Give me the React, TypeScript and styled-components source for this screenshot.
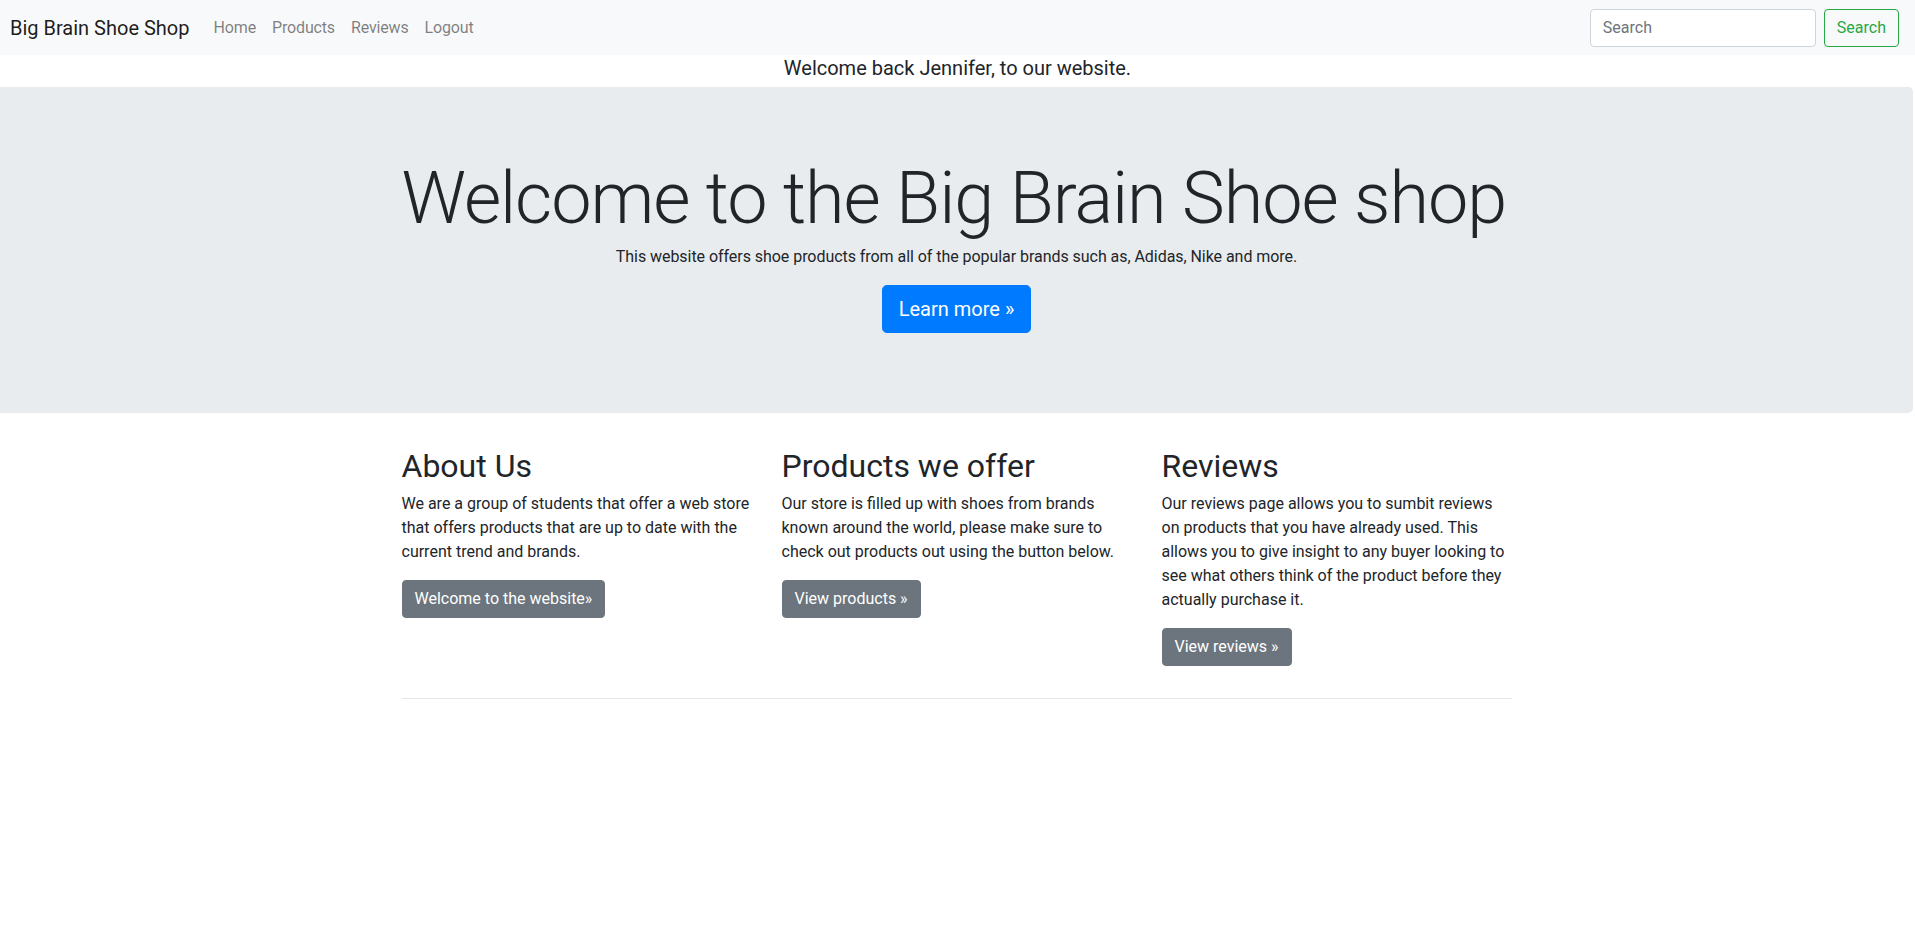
import React from "react";
import styled, { createGlobalStyle } from "styled-components";

const GlobalStyle = createGlobalStyle`
  *, *::before, *::after { box-sizing: border-box; }
  html, body { margin: 0; padding: 0; background: #fff; }
  body {
    font-family: Roboto, "Liberation Sans", Arial, sans-serif;
    font-size: 16px;
    line-height: 1.5;
    color: #212529;
  }
`;

const Navbar = styled.nav`
  display: flex;
  align-items: center;
  justify-content: space-between;
  height: 55px;
  padding: 0 16px 0 10px;
  background: #f8f9fa;
`;

const NavLeft = styled.div`
  display: flex;
  align-items: center;
`;

const Brand = styled.a`
  font-size: 20px;
  line-height: 30px;
  padding: 5px 0;
  margin-right: 16px;
  color: rgba(0, 0, 0, 0.9);
  text-decoration: none;
  white-space: nowrap;
`;

const NavList = styled.ul`
  display: flex;
  list-style: none;
  margin: 0;
  padding: 0;
`;

const NavLink = styled.a`
  display: block;
  padding: 8px;
  color: rgba(0, 0, 0, 0.5);
  text-decoration: none;
  letter-spacing: -0.15px;
`;

const SearchForm = styled.form`
  display: flex;
  align-items: center;
  gap: 8px;
`;

const SearchInput = styled.input`
  width: 226px;
  height: 38px;
  padding: 6px 12px;
  font: inherit;
  font-size: 16px;
  color: #495057;
  background: #fff;
  border: 1px solid #ced4da;
  border-radius: 4px;
  &::placeholder { color: #6c757d; opacity: 1; }
`;

const OutlineButton = styled.button`
  height: 38px;
  padding: 6px 12px;
  font: inherit;
  font-size: 16px;
  line-height: 24px;
  color: #28a745;
  background: transparent;
  border: 1px solid #28a745;
  border-radius: 4px;
`;

const WelcomeBack = styled.h5`
  margin: 0 0 8px;
  padding-top: 3px;
  font-size: 20px;
  font-weight: 400;
  line-height: 21px;
  text-align: center;
`;

const Main = styled.main`
  margin-right: 2px;
`;

const Jumbotron = styled.section`
  background: #e9ecef;
  padding: 64px 32px;
  margin-bottom: 32px;
  border-radius: 0 4.8px 4.8px 0;
`;

const Container = styled.div`
  max-width: 1140px;
  margin: 0 auto;
  padding: 0 15px;
`;

const Hero = styled(Container)`
  text-align: center;
`;

const Display = styled.h1`
  margin: 0 0 8px;
  padding-top: 10.4px;
  font-size: 72px;
  font-weight: 300;
  line-height: 76px;
  letter-spacing: -1.08px;
  white-space: nowrap;
  text-align: left;
`;

const Lead = styled.p`
  margin: 0 0 16px;
  letter-spacing: -0.05px;
`;

const ButtonRow = styled.p`
  margin: 0 0 16px;
`;

const PrimaryLg = styled.a`
  display: inline-block;
  padding: 8px 16px;
  font-size: 20px;
  line-height: 1.5;
  color: #fff;
  background: #007bff;
  border: 1px solid #007bff;
  border-radius: 4.8px;
  text-decoration: none;
`;

const Columns = styled.div`
  display: grid;
  grid-template-columns: repeat(3, 1fr);
  column-gap: 30px;
`;

const Column = styled.div``;

const ColTitle = styled.h2`
  margin: 0 0 8px;
  padding-top: 4.6px;
  font-size: 32px;
  font-weight: 400;
  line-height: 33.8px;
`;

const ColText = styled.p`
  margin: 0 0 16px;
`;

const ColAction = styled.p`
  margin: 0 0 16px;
`;

const SecondaryButton = styled.a`
  display: inline-block;
  padding: 6px 12px;
  font-size: 16px;
  line-height: 24px;
  color: #fff;
  background: #6c757d;
  border: 1px solid #6c757d;
  border-radius: 4px;
  text-decoration: none;
`;

const Divider = styled.hr`
  margin: 16px 0;
  border: 0;
  border-top: 1px solid rgba(0, 0, 0, 0.1);
`;

const columns = [
  {
    title: "About Us",
    text: "We are a group of students that offer a web store that offers products that are up to date with the current trend and brands.",
    button: "Welcome to the website\u00bb",
  },
  {
    title: "Products we offer",
    text: "Our store is filled up with shoes from brands known around the world, please make sure to check out products out using the button below.",
    button: "View products \u00bb",
  },
  {
    title: "Reviews",
    text: "Our reviews page allows you to sumbit reviews on products that you have already used. This allows you to give insight to any buyer looking to see what others think of the product before they actually purchase it.",
    button: "View reviews \u00bb",
  },
];

export default function App() {
  return (
    <>
      <GlobalStyle />
      <Navbar>
        <NavLeft>
          <Brand href="#">Big Brain Shoe Shop</Brand>
          <NavList>
            <li><NavLink href="#">Home</NavLink></li>
            <li><NavLink href="#">Products</NavLink></li>
            <li><NavLink href="#">Reviews</NavLink></li>
            <li><NavLink href="#">Logout</NavLink></li>
          </NavList>
        </NavLeft>
        <SearchForm onSubmit={(e) => e.preventDefault()}>
          <SearchInput type="search" placeholder="Search" aria-label="Search" />
          <OutlineButton type="submit">Search</OutlineButton>
        </SearchForm>
      </Navbar>
      <WelcomeBack>Welcome back Jennifer, to our website.</WelcomeBack>
      <Main>
        <Jumbotron>
          <Hero>
            <Display>Welcome to the Big Brain Shoe shop</Display>
            <Lead>This website offers shoe products from all of the popular brands such as, Adidas, Nike and more.</Lead>
            <ButtonRow>
              <PrimaryLg href="#">Learn more &raquo;</PrimaryLg>
            </ButtonRow>
          </Hero>
        </Jumbotron>
        <Container>
          <Columns>
            {columns.map((c) => (
              <Column key={c.title}>
                <ColTitle>{c.title}</ColTitle>
                <ColText>{c.text}</ColText>
                <ColAction>
                  <SecondaryButton href="#">{c.button}</SecondaryButton>
                </ColAction>
              </Column>
            ))}
          </Columns>
          <Divider />
        </Container>
      </Main>
    </>
  );
}
